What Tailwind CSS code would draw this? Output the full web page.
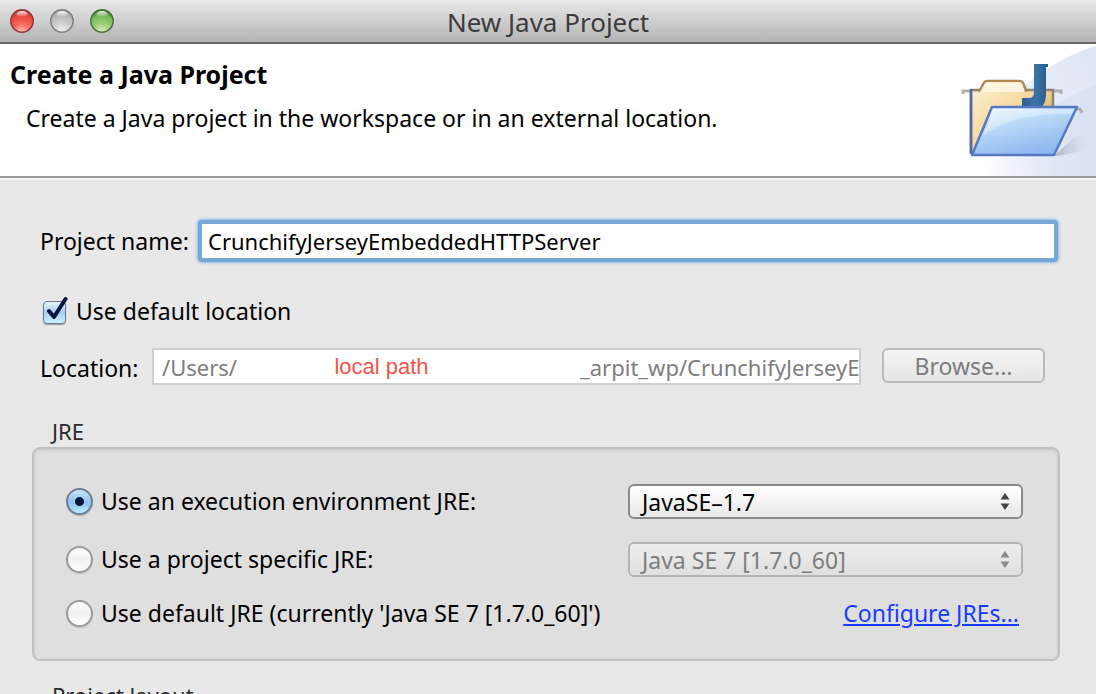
<!DOCTYPE html>
<html lang="en">
<head>
    <meta charset="UTF-8">
    <meta name="viewport" content="width=device-width, initial-scale=1.0">
    <title>New Java Project</title>
    <script src="https://cdn.jsdelivr.net/npm/@tailwindcss/browser@4"></script>
</head>
<body class="h-screen overflow-hidden bg-[#e8e8e8] font-['Noto_Sans',sans-serif] text-[23px] leading-8 text-black">
    <!-- Title bar -->
    <header class="flex h-11 items-center border-b-2 border-[#666] bg-linear-to-b from-[#e9e9e9] to-[#b4b4b4] px-2.5">
        <div class="flex flex-1 gap-4">
            <button type="button" aria-label="Close">
                <svg class="h-6 w-6" viewBox="0 0 24 24">
                    <defs>
                        <radialGradient id="red" cx="50%" cy="100%" r="95%"><stop offset="0" stop-color="#f9c8c0"/><stop offset=".4" stop-color="#f9695d"/><stop offset=".75" stop-color="#ea4a42"/><stop offset="1" stop-color="#b8443c"/></radialGradient>
                        <radialGradient id="grey" cx="50%" cy="100%" r="95%"><stop offset="0" stop-color="#f4f4f4"/><stop offset=".45" stop-color="#d0d0d0"/><stop offset="1" stop-color="#a8a8a8"/></radialGradient>
                        <radialGradient id="green" cx="50%" cy="100%" r="95%"><stop offset="0" stop-color="#e6ecc8"/><stop offset=".4" stop-color="#9bd179"/><stop offset=".75" stop-color="#79bb59"/><stop offset="1" stop-color="#4f803c"/></radialGradient>
                        <linearGradient id="gloss" x2="0" y2="1"><stop offset="0" stop-color="#fff" stop-opacity=".9"/><stop offset="1" stop-color="#fff" stop-opacity="0"/></linearGradient>
                    </defs>
                    <circle cx="12" cy="12" r="11.2" fill="url(#red)" stroke="#8f3a34" stroke-width="1.4"/>
                    <ellipse cx="12" cy="5" rx="5.5" ry="3" fill="url(#gloss)"/>
                </svg>
            </button>
            <button type="button" aria-label="Minimize">
                <svg class="h-6 w-6" viewBox="0 0 24 24">
                    <circle cx="12" cy="12" r="11.2" fill="url(#grey)" stroke="#808080" stroke-width="1.4"/>
                    <ellipse cx="12" cy="5" rx="5.5" ry="3" fill="url(#gloss)"/>
                </svg>
            </button>
            <button type="button" aria-label="Zoom">
                <svg class="h-6 w-6" viewBox="0 0 24 24">
                    <circle cx="12" cy="12" r="11.2" fill="url(#green)" stroke="#47703a" stroke-width="1.4"/>
                    <ellipse cx="12" cy="5" rx="5.5" ry="3" fill="url(#gloss)"/>
                </svg>
            </button>
        </div>
        <div class="pt-0.5 text-[26px] text-[#3c3c3c]">New Java Project</div>
        <div class="flex-1"></div>
    </header>

    <!-- Wizard banner -->
    <section class="flex justify-between border-b-2 border-[#999] bg-white">
        <div class="pt-3.5 pl-2.5">
            <h1 class="text-[25px] font-bold">Create a Java Project</h1>
            <p class="mt-3 pl-4">Create a Java project in the workspace or in an external location.</p>
        </div>
        <svg class="h-[132px] w-[150px] shrink-0" viewBox="0 4 150 132">
            <defs>
                <linearGradient id="sky" x1="0" y1=".8" x2="1" y2=".2"><stop offset=".1" stop-color="#fff"/><stop offset=".6" stop-color="#e9eef8"/><stop offset="1" stop-color="#e0e7f4"/></linearGradient>
                <linearGradient id="haze" x2="1"><stop offset="0" stop-color="#d9e2f2" stop-opacity="0"/><stop offset="1" stop-color="#d9e2f2"/></linearGradient>
                <linearGradient id="back" x2="1" y2="1"><stop offset="0" stop-color="#fdf3d8"/><stop offset=".5" stop-color="#f5d698"/><stop offset="1" stop-color="#c08a3a"/></linearGradient>
                <linearGradient id="front" x2=".5" y2="1"><stop offset="0" stop-color="#eefbff"/><stop offset=".4" stop-color="#bcdcf8"/><stop offset="1" stop-color="#8db9ee"/></linearGradient>
                <linearGradient id="letter" x2="1"><stop offset="0" stop-color="#2b5c8c"/><stop offset=".5" stop-color="#3c75a8"/><stop offset="1" stop-color="#285a8c"/></linearGradient>
                <linearGradient id="shade" x2="1"><stop offset="0" stop-color="#a9aebd"/><stop offset="1" stop-color="#dde4f3" stop-opacity="0"/></linearGradient>
            </defs>
            <path d="M150 6C110 18 70 45 40 90Q24 118 0 136H150Z" fill="url(#sky)"/>
            <path d="M150 46C112 56 80 82 40 136H150Z" fill="url(#haze)"/>
            <path d="M128 98Q142 92 148 100Q138 114 108 116Z" fill="url(#shade)"/>
            <path d="M17 54V51H34M107 51H115V54M38 73V70H46M130 69H134L136 73" fill="none" stroke="#b0b0b0" stroke-width="3"/>
            <path d="M25 50H34L38 43Q39 41 42 41H73Q76 41 77 43L80 50H107V112H25Z" fill="url(#back)" stroke="#8d8375" stroke-width="2.5"/>
            <path d="M33 52L38 43Q39 41 42 41H73Q76 41 77 43L80 52" fill="#fdf4dd" stroke="#b28a4d" stroke-width="2"/>
            <path d="M25 49V114" stroke="#4a6ba6" stroke-width="2.5"/>
            <path d="M88 24H102V27H100V56Q99 68 90 70H76V58H83Q88 58 88 52Z" fill="url(#letter)"/>
            <path d="M46 67H131L108 115H26Z" fill="url(#front)" stroke="#5878c6" stroke-width="2.5" stroke-linejoin="round"/>
            <path d="M47 69H128L126 74C86 73 56 80 37 96Z" fill="#fff" opacity=".35"/>
        </svg>
    </section>

    <form class="border-t-2 border-[#f4f4f4] pt-10 pr-9 pl-8">
        <div class="flex items-center pl-2">
            <label for="project" class="w-[158px]">Project name:</label>
            <input id="project" type="text" value="CrunchifyJerseyEmbeddedHTTPServer" class="mr-0.5 h-[42px] min-w-0 flex-1 rounded-sm border-4 border-[#76a8d6] bg-white px-1.5 text-[22px] shadow-[0_0_3px_1px_#8db8e0] outline-none">
        </div>

        <div class="mt-[33px] flex items-center gap-2 pl-2">
            <span class="relative h-8 w-7">
                <input id="default-location" type="checkbox" checked class="mt-1.5 ml-[3px] block h-[23px] w-[23px] appearance-none rounded border border-[#6a7a92] bg-linear-to-b from-[#e8f4fd] via-[#a5d0f4] to-[#c9f0ff] shadow-[0_1px_1px_#999]">
                <svg class="pointer-events-none absolute top-0 left-0 h-8 w-7" viewBox="0 0 28 32"><path d="M9 16L14 22L25.500 4" fill="none" stroke="#08183c" stroke-width="4" stroke-linecap="round" stroke-linejoin="round"/></svg>
            </span>
            <label for="default-location">Use default location</label>
        </div>

        <div class="mt-[21px] flex items-start pr-[15px] pl-2">
            <label for="location" class="w-28 pt-1">Location:</label>
            <div class="flex h-[37px] min-w-0 flex-1 items-center border-2 border-[#cfcfcf] bg-white pl-2 text-[22px] text-[#7d7d7d]">
                <input id="location" type="text" value="/Users/" disabled class="w-[77px]">
                <span class="flex-1 pr-14 text-center font-['Liberation_Sans',sans-serif] text-[#f4544a]">local path</span>
                <input type="text" value="_arpit_wp/CrunchifyJerseyEmbedded" aria-label="Workspace folder" disabled class="w-[279px]">
            </div>
            <button type="button" disabled class="ml-[21px] h-[35px] w-[163px] rounded-md border-2 border-[#b9b9b9] bg-linear-to-b from-[#f4f4f4] to-[#e6e6e6] leading-7 text-[#7d7d7d]">Browse...</button>
        </div>

        <div role="group" aria-labelledby="jre-title">
            <h2 id="jre-title" class="mt-[30px] pl-5 text-[22px] text-[#2c2c2c]">JRE</h2>
            <div class="flex h-[214px] flex-col rounded-lg border-2 border-[#c2c2c2] bg-[#dfdfdf] pt-[34px] pr-[35px] pl-8 shadow-[inset_0_1px_3px_#c4c4c4]">
                <div class="flex h-9 items-center">
                    <input id="env" type="radio" name="jre" checked class="h-[27px] w-[27px] appearance-none rounded-full border-2 border-[#6f7d92] bg-[radial-gradient(circle,#071634_4px,transparent_5px),linear-gradient(#d6eafb,#8bc3f0_55%,#c9f1ff)] bg-origin-border shadow-[0_1px_1px_#aaa]">
                    <label for="env" class="ml-2 flex-1">Use an execution environment JRE:</label>
                    <div class="relative w-[395px]">
                        <select aria-label="Execution environment" class="block h-[35px] w-full appearance-none rounded-md border-2 border-[#8a8a8a] bg-linear-to-b from-white to-[#e9e9e9] pl-1 indent-2"><option>JavaSE–1.7</option></select>
                        <svg class="pointer-events-none absolute top-2 right-3 h-5 w-3" viewBox="0 0 12 20"><path d="M6 1L10.500 7.500H1.500ZM6 18L1.500 11.500H10.500Z" fill="#444"/></svg>
                    </div>
                </div>
                <div class="mt-[22px] flex h-9 items-center">
                    <input id="specific" type="radio" name="jre" class="h-[27px] w-[27px] appearance-none rounded-full border-2 border-[#9a9a9a] bg-linear-to-b from-white via-[#f0f0f0] to-white shadow-[0_1px_1px_#bbb]">
                    <label for="specific" class="ml-2 flex-1">Use a project specific JRE:</label>
                    <div class="relative w-[395px]">
                        <select aria-label="Project JRE" disabled class="block h-[35px] w-full appearance-none rounded-md border-2 border-[#b5b5b5] bg-linear-to-b from-[#eeeeee] to-[#e0e0e0] pl-1 indent-2 text-[#7d7d7d] opacity-100"><option>Java SE 7 [1.7.0_60]</option></select>
                        <svg class="pointer-events-none absolute top-2 right-3 h-5 w-3" viewBox="0 0 12 20"><path d="M6 1L10.500 7.500H1.500ZM6 18L1.500 11.500H10.500Z" fill="#8a8a8a"/></svg>
                    </div>
                </div>
                <div class="mt-[18px] flex h-9 items-center">
                    <input id="default-jre" type="radio" name="jre" class="h-[27px] w-[27px] appearance-none rounded-full border-2 border-[#9a9a9a] bg-linear-to-b from-white via-[#f0f0f0] to-white shadow-[0_1px_1px_#bbb]">
                    <label for="default-jre" class="ml-2 flex-1">Use default JRE (currently 'Java SE 7 [1.7.0_60]')</label>
                    <a href="#" class="mr-1 text-[#173cff] underline decoration-2 underline-offset-2">Configure JREs...</a>
                </div>
            </div>
        </div>

        <h2 class="mt-[18px] pl-5 text-[22px] text-[#2c2c2c]">Project layout</h2>
    </form>
</body>
</html>
